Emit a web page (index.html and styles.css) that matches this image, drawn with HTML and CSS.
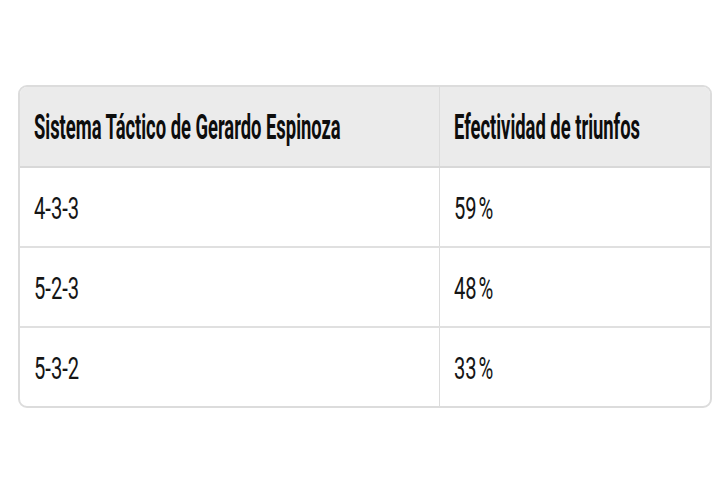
FILE: index.html
```html
<!DOCTYPE html>
<html lang="es">
<head>
<meta charset="utf-8">
<link rel="stylesheet" href="styles.css">
</head>
<body>
<div class="wrap">
  <table class="tbl">
    <thead>
      <tr>
        <th class="c1"><span class="txt">Sistema Táctico de Gerardo Espinoza</span></th>
        <th class="c2"><span class="txt">Efectividad de triunfos</span></th>
      </tr>
    </thead>
    <tbody>
      <tr><td class="c1"><span class="txt">4-3-3</span></td><td class="c2"><span class="txt">59<span class="pct">%</span></span></td></tr>
      <tr><td class="c1"><span class="txt">5-2-3</span></td><td class="c2"><span class="txt">48<span class="pct">%</span></span></td></tr>
      <tr><td class="c1"><span class="txt">5-3-2</span></td><td class="c2"><span class="txt">33<span class="pct">%</span></span></td></tr>
    </tbody>
  </table>
</div>
</body>
</html>
```
FILE: styles.css
```css
html, body { margin: 0; padding: 0; background: #ffffff; }
body { font-family: Roboto, "Liberation Sans", sans-serif; color: #111; }
.wrap {
  margin: 85px 0 0 18px;
  width: 694px;
  border: 2px solid #dcdcdc;
  border-radius: 9px;
  overflow: hidden;
  box-sizing: border-box;
}
.tbl { width: 100%; border-collapse: collapse; table-layout: fixed; }
.tbl th, .tbl td {
  text-align: left;
  padding: 0 0 0 14px;
  white-space: nowrap;
  overflow: visible;
  line-height: 1;
}
.tbl th {
  background: #ebebeb;
  height: 79px;
  font-weight: 700;
  font-size: 35px;
  color: #0d0d0d;
  border-bottom: 2px solid #d8d8d8;
}
.tbl td {
  height: 78px;
  font-weight: 400;
  font-size: 32px;
  color: #151515;
  border-bottom: 2px solid #e0e0e0;
}
.tbl tbody tr:last-child td { border-bottom: none; }
.c1 { width: 405px; border-right: 1px solid #dcdcdc; }
.c2 { width: auto; }
.txt { display: inline-block; transform-origin: left center; }
th .txt { transform: scaleX(0.525); padding-top: 1px; }
td .txt { transform: scaleX(0.63); padding-top: 2px; }
.pct { margin-left: 3px; }
```
